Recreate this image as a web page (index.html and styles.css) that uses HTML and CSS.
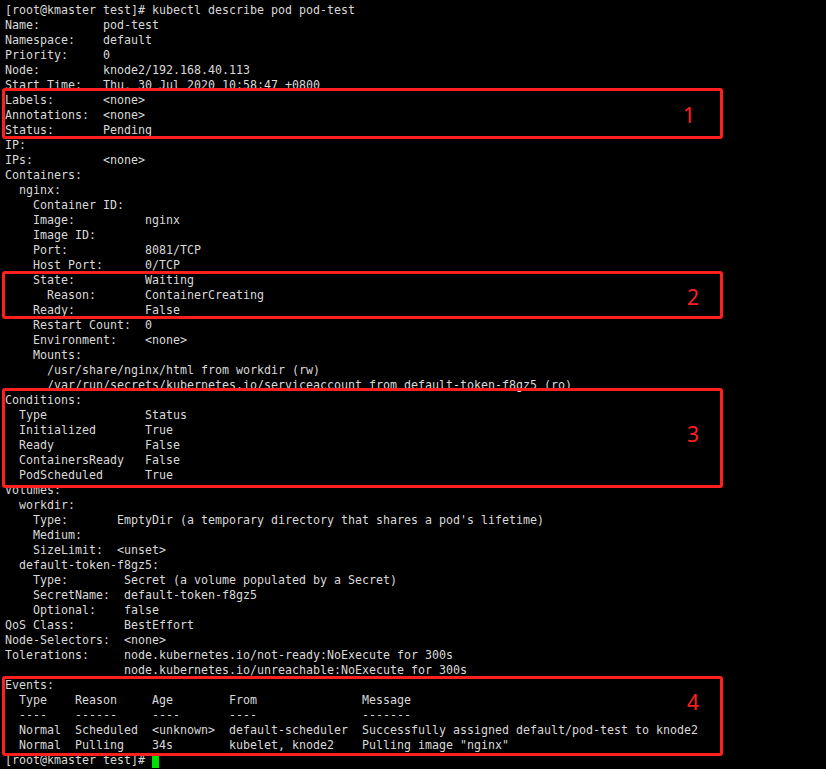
FILE: index.html
```html
<!DOCTYPE html>
<html>
<head>
  <link rel="stylesheet" href="styles.css">
</head>
<body>
  <div class="terminal">
<pre class="output">[root@kmaster test]# kubectl describe pod pod-test
Name:         pod-test
Namespace:    default
Priority:     0
Node:         knode2/192.168.40.113
Start Time:   Thu, 30 Jul 2020 10:58:47 +0800
Labels:       &lt;none&gt;
Annotations:  &lt;none&gt;
Status:       Pending
IP:
IPs:          &lt;none&gt;
Containers:
  nginx:
    Container ID:
    Image:          nginx
    Image ID:
    Port:           8081/TCP
    Host Port:      0/TCP
    State:          Waiting
      Reason:       ContainerCreating
    Ready:          False
    Restart Count:  0
    Environment:    &lt;none&gt;
    Mounts:
      /usr/share/nginx/html from workdir (rw)
      /var/run/secrets/kubernetes.io/serviceaccount from default-token-f8gz5 (ro)
Conditions:
  Type              Status
  Initialized       True
  Ready             False
  ContainersReady   False
  PodScheduled      True
Volumes:
  workdir:
    Type:       EmptyDir (a temporary directory that shares a pod's lifetime)
    Medium:
    SizeLimit:  &lt;unset&gt;
  default-token-f8gz5:
    Type:        Secret (a volume populated by a Secret)
    SecretName:  default-token-f8gz5
    Optional:    false
QoS Class:       BestEffort
Node-Selectors:  &lt;none&gt;
Tolerations:     node.kubernetes.io/not-ready:NoExecute for 300s
                 node.kubernetes.io/unreachable:NoExecute for 300s
Events:
  Type    Reason     Age        From               Message
  ----    ------     ----       ----               -------
  Normal  Scheduled  &lt;unknown&gt;  default-scheduler  Successfully assigned default/pod-test to knode2
  Normal  Pulling    34s        kubelet, knode2    Pulling image "nginx"
[root@kmaster test]# <span class="cursor"> </span></pre>

    <!-- annotation boxes drawn over the screenshot -->
    <div class="mark mark-1"><span class="mark-num">1</span></div>
    <div class="mark mark-2"><span class="mark-num">2</span></div>
    <div class="mark mark-3"><span class="mark-num">3</span></div>
    <div class="mark mark-4"><span class="mark-num">4</span></div>
  </div>
</body>
</html>
```

FILE: styles.css
```css
body {
  margin: 0;
  padding: 0;
  background: #000000;
  height: 100vh;
  overflow: hidden;
}
.terminal {
  position: relative;
  height: 100%;
}
.output {
  margin: 0;
  padding: 3px 5px 0;
  font-family: "DejaVu Sans Mono", monospace;
  font-size: 11.63px;
  line-height: 15px;
  color: #d9d9d9;
  white-space: pre;
}
.cursor {
  display: inline-block;
  width: 7px;
  height: 15px;
  vertical-align: top;
  background: #00e000;
}
.mark {
  position: absolute;
  left: 2px;
  width: 721px;
  box-sizing: border-box;
  border: 3px solid #ff1f1f;
  border-radius: 3px;
}
.mark-1 {
  top: 88px;
  height: 51px;
}
.mark-2 {
  top: 271px;
  height: 48px;
}
.mark-3 {
  top: 388px;
  height: 100px;
}
.mark-4 {
  top: 676px;
  height: 80px;
}
.mark-num {
  position: absolute;
  right: 21px;
  font-family: "Noto Sans", sans-serif;
  font-size: 21px;
  line-height: 1;
  color: #ff1f1f;
}
.mark-1 .mark-num {
  top: 14px;
  right: 25px;
}
.mark-2 .mark-num {
  top: 13px;
}
.mark-3 .mark-num {
  top: 33px;
}
.mark-4 .mark-num {
  top: 13px;
}
```
